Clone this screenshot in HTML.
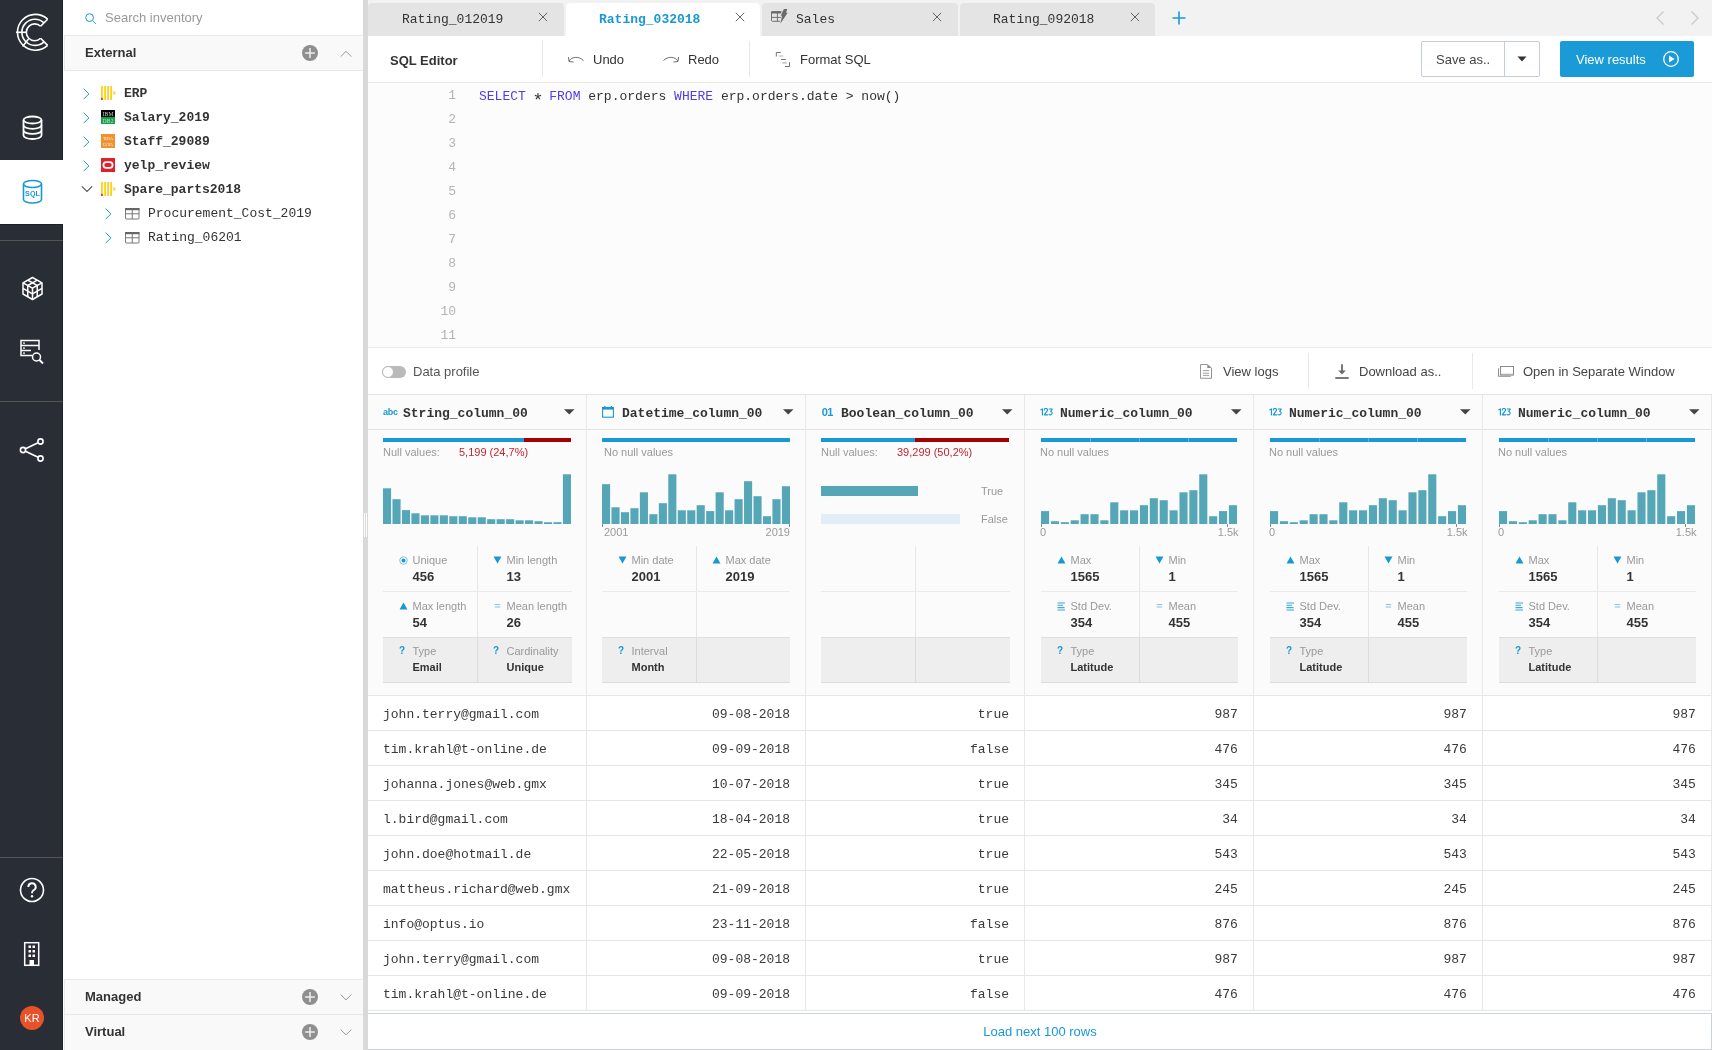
<!DOCTYPE html>
<html><head><meta charset="utf-8">
<style>
*{box-sizing:border-box;margin:0;padding:0}
html,body{width:1712px;height:1050px;overflow:hidden;background:#fff;font-family:"Liberation Sans",sans-serif;color:#333;-webkit-font-smoothing:antialiased}
.abs{position:absolute}
.mono{font-family:"Liberation Mono",monospace}
#nav{position:absolute;left:0;top:0;width:63px;height:1050px;background:#292d36;will-change:transform;border-right:1px solid #1c2029}
#side{position:absolute;left:63px;top:0;width:300px;height:1050px;background:#fff;will-change:transform}
#sbar{position:absolute;left:363px;top:0;width:5px;height:1050px;background:#d9d9d9}
#main{position:absolute;left:368px;top:0;width:1344px;height:1050px;background:#fff;will-change:transform}
</style></head><body>
<div id="nav">
  <div class="abs" style="left:0;top:160px;width:63px;height:64px;background:#fff"></div>
  <div class="abs" style="left:0;top:240px;width:63px;height:1px;background:#545454"></div><div class="abs" style="left:0;top:224px;width:63px;height:1px;background:#1c2029"></div>
  <div class="abs" style="left:0;top:401px;width:63px;height:1px;background:#545454"></div>
  <div class="abs" style="left:0;top:857px;width:63px;height:1px;background:#545454"></div>

  <svg class="abs" style="left:0;top:0" width="63" height="70" viewBox="0 0 63 70">
    <g fill="none" stroke="#fff" stroke-width="1.6">
      <path d="M47.6 19.2 A17.9 17.9 0 1 0 47.6 45.4"/>
      <path d="M44 22.8 A13.1 13.1 0 1 0 44 41.8"/>
      <path d="M40.6 26.3 A8.4 8.4 0 1 0 40.6 38.3"/>
      <path d="M47.6 19.2 L40.6 26.3"/>
      <path d="M47.6 45.4 L40.6 38.3"/>
      <path d="M16 32.3 L26 32.3"/>
      <path d="M22.6 46.4 L28.5 38.9"/>
    </g>
  </svg>
  <svg class="abs" style="left:20px;top:113px" width="25" height="30" viewBox="0 0 25 30">
    <g fill="none" stroke="#fff" stroke-width="1.8">
      <ellipse cx="12.5" cy="7" rx="9" ry="3.5"/>
      <path d="M3.5 7 V22.5 A9 3.5 0 0 0 21.5 22.5 V7"/>
      <path d="M3.5 12.3 A9 3.5 0 0 0 21.5 12.3"/>
      <path d="M3.5 17.4 A9 3.5 0 0 0 21.5 17.4"/>
    </g>
  </svg>
  <svg class="abs" style="left:20px;top:177px" width="25" height="30" viewBox="0 0 25 30">
    <g fill="none" stroke="#1899d4" stroke-width="1.6">
      <ellipse cx="12.5" cy="7" rx="9" ry="3.5"/>
      <path d="M3.5 7 V22.5 A9 3.5 0 0 0 21.5 22.5 V7"/>
    </g>
    <text x="12.5" y="19.3" text-anchor="middle" font-family="Liberation Sans" font-weight="bold" font-size="7.2" fill="#1899d4">SQL</text>
  </svg>
  <svg class="abs" style="left:20px;top:275px" width="25" height="28" viewBox="0 0 25 28">
    <g fill="none" stroke="#fff" stroke-width="1.5" stroke-linejoin="round">
      <path d="M12.5 2.5 L22 7.8 V19 L12.5 24.5 L3 19 V7.8 Z"/>
      <path d="M3 7.8 L12.5 13.2 L22 7.8"/>
      <path d="M12.5 13.2 V24.5"/>
      <path d="M7.75 5.15 L17.25 10.5"/>
      <path d="M17.25 5.15 L7.75 10.5"/>
      <path d="M3 13.4 L12.5 18.8 L22 13.4"/>
      <path d="M7.75 10.5 V21.75"/>
      <path d="M17.25 10.5 V21.75"/>
    </g>
  </svg>
  <svg class="abs" style="left:18px;top:338px" width="28" height="28" viewBox="0 0 28 28">
    <g fill="none" stroke="#fff" stroke-width="1.5">
      <path d="M14 17.5 H3 V2.5 H21 V12"/>
      <path d="M3 7.5 H21"/>
      <path d="M3 12.5 H13"/>
      <circle cx="18.5" cy="19" r="4"/>
      <path d="M21.5 22 L25 25.5" stroke-width="2"/>
    </g>
    <g fill="#fff"><rect x="5" y="4.5" width="2" height="1.2"/><rect x="5" y="9.5" width="2" height="1.2"/><rect x="5" y="14.5" width="2" height="1.2"/></g>
  </svg>
  <svg class="abs" style="left:18px;top:436px" width="28" height="28" viewBox="0 0 28 28">
    <g fill="none" stroke="#fff" stroke-width="1.6">
      <circle cx="5" cy="14" r="2.6"/>
      <circle cx="22.5" cy="5.5" r="2.6"/>
      <circle cx="22.5" cy="22.5" r="2.6"/>
      <path d="M7.4 12.8 L20.1 6.7"/>
      <path d="M7.4 15.2 L20.1 21.3"/>
    </g>
  </svg>
  <svg class="abs" style="left:18px;top:876px" width="28" height="28" viewBox="0 0 28 28">
    <g fill="none" stroke="#fff" stroke-width="1.6">
      <circle cx="14" cy="14" r="11.5"/>
      <path d="M10.3 11 A3.7 3.7 0 1 1 15.5 14.3 C14.3 15 14 15.6 14 17.2" stroke-width="1.9"/>
    </g>
    <circle cx="14" cy="20.3" r="1.2" fill="#fff"/>
  </svg>
  <svg class="abs" style="left:22px;top:940px" width="20" height="28" viewBox="0 0 20 28">
    <rect x="2.7" y="2.7" width="14" height="22.6" fill="none" stroke="#fff" stroke-width="1.5"/>
    <g fill="#fff">
      <rect x="6.5" y="5.5" width="2.5" height="2.5"/><rect x="10.5" y="5.5" width="2.5" height="2.5"/>
      <rect x="6.5" y="10" width="2.5" height="2.5"/><rect x="10.5" y="10" width="2.5" height="2.5"/>
      <rect x="6.5" y="14.5" width="2.5" height="2.5"/><rect x="10.5" y="14.5" width="2.5" height="2.5"/>
      <rect x="7.5" y="20" width="4.5" height="5.5"/>
    </g>
  </svg>
  <div class="abs" style="left:20px;top:1006px;width:24px;height:24px;border-radius:50%;background:#e8522a;color:#fff;font-size:11px;line-height:24px;text-align:center">KR</div>
</div>
<div id="side">
<!--SIDE-->
  <svg class="abs" style="left:21px;top:12px" width="14" height="14" viewBox="0 0 14 14"><g fill="none" stroke="#1899d4" stroke-width="1"><circle cx="5.6" cy="5.6" r="3.9"/><path d="M8.5 8.5 L11.8 11.8"/></g></svg>
  <div class="abs" style="left:42px;top:10px;font-size:13px;color:#999;line-height:16px">Search inventory</div>
  <div class="abs" style="left:1px;top:35px;width:299px;height:36px;background:#f9f9f9;border:1px solid #e8e8e8;border-right:none"></div>
  <div class="abs" style="left:22px;top:45px;font-size:13px;font-weight:bold;color:#333;line-height:16px">External</div>
  <svg class="abs" style="left:239px;top:45px" width="16" height="16" viewBox="0 0 16 16"><circle cx="8" cy="8" r="8" fill="#8f8f8f"/><path d="M8 3.1V12.9M3.1 8H12.9" stroke="#eeeeee" stroke-width="1.5"/></svg>
  <svg class="abs" style="left:276px;top:48px" width="14" height="10" viewBox="0 0 14 10"><path d="M1.7 8.6 L7 3.3 L12.3 8.6" fill="none" stroke="#8a8a8a" stroke-width="0.9"/></svg>
<svg class="abs" style="left:20px;top:87.8px" width="8" height="12" viewBox="0 0 8 12"><path d="M0.6 0.6 L5.9 5.9 L0.6 11.2" fill="none" stroke="#1f9bd6" stroke-width="1"/></svg><svg class="abs" style="left:38px;top:86px" width="15" height="14" viewBox="0 0 15 14"><g fill="#fdd21f"><rect x="0" y="0" width="1.8" height="14"/><rect x="3.2" y="0" width="1.8" height="14"/><rect x="6.2" y="0" width="1.8" height="14"/><rect x="9.2" y="0" width="1.8" height="14"/><rect x="12.3" y="5.4" width="1.9" height="3"/></g><rect x="0" y="11.8" width="1.8" height="2.2" fill="#ee3124"/></svg><div class="abs mono" style="left:61px;top:85.9px;font-size:13px;line-height:16px;font-weight:bold;color:#333;white-space:nowrap">ERP</div><svg class="abs" style="left:20px;top:111.8px" width="8" height="12" viewBox="0 0 8 12"><path d="M0.6 0.6 L5.9 5.9 L0.6 11.2" fill="none" stroke="#1f9bd6" stroke-width="1"/></svg><svg class="abs" style="left:38px;top:110px" width="14" height="14" viewBox="0 0 14 14"><rect width="14" height="7" fill="#050505"/><rect y="7" width="14" height="7" fill="#12a04a"/><text x="7" y="5.7" text-anchor="middle" font-family="Liberation Serif" font-size="5.6" fill="#ccc" textLength="11">IBM</text><text x="7" y="12.7" text-anchor="middle" font-family="Liberation Serif" font-size="5.6" fill="#bde5c8" textLength="11">DB2</text></svg><div class="abs mono" style="left:61px;top:109.9px;font-size:13px;line-height:16px;font-weight:bold;color:#333;white-space:nowrap">Salary_2019</div><svg class="abs" style="left:20px;top:135.8px" width="8" height="12" viewBox="0 0 8 12"><path d="M0.6 0.6 L5.9 5.9 L0.6 11.2" fill="none" stroke="#1f9bd6" stroke-width="1"/></svg><svg class="abs" style="left:38px;top:134px" width="14" height="14" viewBox="0 0 14 14"><rect width="14" height="14" fill="#f29130"/><text x="7" y="6.3" text-anchor="middle" font-family="Liberation Serif" font-size="5" fill="#fde6cc" textLength="10">TERA</text><text x="7" y="11.8" text-anchor="middle" font-family="Liberation Serif" font-size="5" fill="#fde6cc" textLength="10">DATA</text></svg><div class="abs mono" style="left:61px;top:133.9px;font-size:13px;line-height:16px;font-weight:bold;color:#333;white-space:nowrap">Staff_29089</div><svg class="abs" style="left:20px;top:159.8px" width="8" height="12" viewBox="0 0 8 12"><path d="M0.6 0.6 L5.9 5.9 L0.6 11.2" fill="none" stroke="#1f9bd6" stroke-width="1"/></svg><svg class="abs" style="left:38px;top:158px" width="14" height="14" viewBox="0 0 14 14"><rect width="14" height="14" fill="#e3202a"/><rect x="2.4" y="4.1" width="9.2" height="5.8" rx="2.9" fill="none" stroke="#fff" stroke-width="1.7"/></svg><div class="abs mono" style="left:61px;top:157.9px;font-size:13px;line-height:16px;font-weight:bold;color:#333;white-space:nowrap">yelp_review</div><svg class="abs" style="left:18px;top:183.9px" width="12" height="10" viewBox="0 0 12 10"><path d="M0.8 2.3 L6 7.5 L11.2 2.3" fill="none" stroke="#555" stroke-width="1.1"/></svg><svg class="abs" style="left:38px;top:182px" width="15" height="14" viewBox="0 0 15 14"><g fill="#fdd21f"><rect x="0" y="0" width="1.8" height="14"/><rect x="3.2" y="0" width="1.8" height="14"/><rect x="6.2" y="0" width="1.8" height="14"/><rect x="9.2" y="0" width="1.8" height="14"/><rect x="12.3" y="5.4" width="1.9" height="3"/></g><rect x="0" y="11.8" width="1.8" height="2.2" fill="#ee3124"/></svg><div class="abs mono" style="left:61px;top:181.9px;font-size:13px;line-height:16px;font-weight:bold;color:#333;white-space:nowrap">Spare_parts2018</div><svg class="abs" style="left:42px;top:207.8px" width="8" height="12" viewBox="0 0 8 12"><path d="M0.6 0.6 L5.9 5.9 L0.6 11.2" fill="none" stroke="#1f9bd6" stroke-width="1"/></svg><svg class="abs" style="left:62px;top:208px" width="15" height="12" viewBox="0 0 15 12"><g fill="none" stroke="#6a6a6a" stroke-width="0.9"><rect x="0.5" y="0.5" width="13.5" height="10.5" rx="0.8"/><path d="M0.5 5.8H14M7.25 2V11"/></g><rect x="0" y="0" width="14.5" height="2.2" fill="#666"/></svg><div class="abs mono" style="left:85px;top:205.9px;font-size:13px;line-height:16px;font-weight:normal;color:#333;white-space:nowrap">Procurement_Cost_2019</div><svg class="abs" style="left:42px;top:231.8px" width="8" height="12" viewBox="0 0 8 12"><path d="M0.6 0.6 L5.9 5.9 L0.6 11.2" fill="none" stroke="#1f9bd6" stroke-width="1"/></svg><svg class="abs" style="left:62px;top:232px" width="15" height="12" viewBox="0 0 15 12"><g fill="none" stroke="#6a6a6a" stroke-width="0.9"><rect x="0.5" y="0.5" width="13.5" height="10.5" rx="0.8"/><path d="M0.5 5.8H14M7.25 2V11"/></g><rect x="0" y="0" width="14.5" height="2.2" fill="#666"/></svg><div class="abs mono" style="left:85px;top:229.9px;font-size:13px;line-height:16px;font-weight:normal;color:#333;white-space:nowrap">Rating_06201</div>
  <div class="abs" style="left:1px;top:979px;width:299px;height:36px;background:#f9f9f9;border-top:1px solid #e8e8e8;border-left:1px solid #e8e8e8;"></div>
  <div class="abs" style="left:22px;top:989px;font-size:13px;font-weight:bold;color:#333;line-height:16px">Managed</div>
  <svg class="abs" style="left:239px;top:989px" width="16" height="16" viewBox="0 0 16 16"><circle cx="8" cy="8" r="8" fill="#8f8f8f"/><path d="M8 3.1V12.9M3.1 8H12.9" stroke="#eeeeee" stroke-width="1.5"/></svg>
  <svg class="abs" style="left:276px;top:992px" width="14" height="10" viewBox="0 0 14 10"><path d="M1.7 2.6 L7 7.9 L12.3 2.6" fill="none" stroke="#8a8a8a" stroke-width="0.9"/></svg>

  <div class="abs" style="left:1px;top:1014px;width:299px;height:36px;background:#f9f9f9;border-top:1px solid #e8e8e8;border-left:1px solid #e8e8e8;"></div>
  <div class="abs" style="left:22px;top:1024px;font-size:13px;font-weight:bold;color:#333;line-height:16px">Virtual</div>
  <svg class="abs" style="left:239px;top:1024px" width="16" height="16" viewBox="0 0 16 16"><circle cx="8" cy="8" r="8" fill="#8f8f8f"/><path d="M8 3.1V12.9M3.1 8H12.9" stroke="#eeeeee" stroke-width="1.5"/></svg>
  <svg class="abs" style="left:276px;top:1027px" width="14" height="10" viewBox="0 0 14 10"><path d="M1.7 2.6 L7 7.9 L12.3 2.6" fill="none" stroke="#8a8a8a" stroke-width="0.9"/></svg>
<!--/SIDE-->
</div>
<div id="sbar"><div class="abs" style="left:1px;top:513px;width:1px;height:24px;background:#fff"></div><div class="abs" style="left:3px;top:513px;width:1px;height:24px;background:#fff"></div></div>
<div id="main">
<!--LOWER-->
  <div class="abs" style="left:14px;top:366px;width:24px;height:12px;border-radius:6px;background:#bababa"></div>
  <div class="abs" style="left:14px;top:366px;width:12px;height:12px;border-radius:6px;background:#fff;border:1px solid #bababa"></div>
  <div class="abs" style="left:45px;top:364px;font-size:13px;color:#555;line-height:16px">Data profile</div>
  <svg class="abs" style="left:832px;top:364px" width="13" height="16" viewBox="0 0 13 16"><g fill="none" stroke="#8a8a8a" stroke-width="0.9"><path d="M0.5 0.5H7.5L11.5 4V14.3H0.5Z"/></g><path d="M7.3 0.6V3.9H11.4Z" fill="#8a8a8a"/><path d="M3 6.6H9M3 9.2H9M3 11.4H9" stroke="#8a8a8a" stroke-width="0.8"/></svg>
  <div class="abs" style="left:855px;top:364px;font-size:13px;color:#444;line-height:16px">View logs</div>
  <div class="abs" style="left:940px;top:353px;width:1px;height:36px;background:#e8e8e8"></div>
  <svg class="abs" style="left:966px;top:363px" width="16" height="17" viewBox="0 0 16 17"><path d="M8 1.3V9" stroke="#6a6a6a" stroke-width="1.8"/><path d="M4.2 7.6H11.8L8 11.6Z" fill="#6a6a6a"/><path d="M1.3 15H14.7" stroke="#6a6a6a" stroke-width="1.8"/></svg>
  <div class="abs" style="left:991px;top:364px;font-size:13px;color:#444;line-height:16px">Download as..</div>
  <div class="abs" style="left:1104px;top:353px;width:1px;height:36px;background:#e8e8e8"></div>
  <svg class="abs" style="left:1129px;top:364px" width="18" height="14" viewBox="0 0 18 14"><rect x="3.5" y="9.6" width="13" height="1.5" fill="#c8c8c8"/><g fill="none" stroke="#888" stroke-width="0.95"><rect x="3.5" y="2.5" width="13" height="8.6"/><path d="M1.5 4.3V12.3H13.8"/></g></svg>
  <div class="abs" style="left:1155px;top:364px;font-size:13px;color:#444;line-height:16px">Open in Separate Window</div>
<div class="abs" style="left:0;top:394px;width:1344px;height:1px;background:#e3e3e3"></div><div class="abs" style="left:0;top:395px;width:1344px;height:300px;background:#fbfbfb"></div><div class="abs" style="left:0;top:429px;width:1344px;height:1px;background:#e3e3e3"></div><div class="abs" style="left:0;top:695px;width:1344px;height:1px;background:#e6e6e6"></div><div class="abs" style="left:218px;top:395px;width:1px;height:615px;background:#e8e8e8"></div><div class="abs" style="left:437px;top:395px;width:1px;height:615px;background:#e8e8e8"></div><div class="abs" style="left:656px;top:395px;width:1px;height:615px;background:#e8e8e8"></div><div class="abs" style="left:885px;top:395px;width:1px;height:615px;background:#e8e8e8"></div><div class="abs" style="left:1114px;top:395px;width:1px;height:615px;background:#e8e8e8"></div><div class="abs" style="left:1343px;top:395px;width:1px;height:615px;background:#e8e8e8"></div><div class="abs" style="left:15px;top:407px;font-size:9px;line-height:10px;color:#1899d4;font-weight:bold;letter-spacing:-0.3px">abc</div><div class="abs mono" style="left:35px;top:406px;font-size:13px;line-height:16px;font-weight:bold;color:#333;white-space:nowrap">String_column_00</div><svg class="abs" style="left:196px;top:408.5px" width="11" height="6" viewBox="0 0 11 6"><path d="M0 0.3H10.5L5.25 5.5Z" fill="#444"/></svg><div class="abs" style="left:15px;top:438px;width:188px;height:4px;background:#a50000"></div><div class="abs" style="left:15px;top:438px;width:141px;height:4px;background:#1899d4"></div><div class="abs" style="left:15px;top:446px;font-size:11px;line-height:13px;color:#999;white-space:nowrap;">Null values:</div><div class="abs" style="left:91px;top:446px;font-size:11px;line-height:13px;color:#c0262d;white-space:nowrap;">5,199 (24,7%)</div><svg class="abs" style="left:15px;top:470px" width="188" height="54" viewBox="0 0 188 54"><rect x="0.00" y="18.30" width="8.1" height="35.70" fill="#55a7b7"/><rect x="9.47" y="29.20" width="8.1" height="24.80" fill="#55a7b7"/><rect x="18.94" y="40.10" width="8.1" height="13.90" fill="#55a7b7"/><rect x="28.41" y="43.30" width="8.1" height="10.70" fill="#55a7b7"/><rect x="37.87" y="45.30" width="8.1" height="8.70" fill="#55a7b7"/><rect x="47.34" y="45.30" width="8.1" height="8.70" fill="#55a7b7"/><rect x="56.81" y="45.30" width="8.1" height="8.70" fill="#55a7b7"/><rect x="66.28" y="46.20" width="8.1" height="7.80" fill="#55a7b7"/><rect x="75.75" y="46.20" width="8.1" height="7.80" fill="#55a7b7"/><rect x="85.22" y="47.30" width="8.1" height="6.70" fill="#55a7b7"/><rect x="94.68" y="47.30" width="8.1" height="6.70" fill="#55a7b7"/><rect x="104.15" y="49.20" width="8.1" height="4.80" fill="#55a7b7"/><rect x="113.62" y="49.20" width="8.1" height="4.80" fill="#55a7b7"/><rect x="123.09" y="49.20" width="8.1" height="4.80" fill="#55a7b7"/><rect x="132.56" y="50.30" width="8.1" height="3.70" fill="#55a7b7"/><rect x="142.03" y="50.30" width="8.1" height="3.70" fill="#55a7b7"/><rect x="151.49" y="51.20" width="8.1" height="2.80" fill="#55a7b7"/><rect x="160.96" y="52.20" width="8.1" height="1.80" fill="#55a7b7"/><rect x="170.43" y="52.20" width="8.1" height="1.80" fill="#55a7b7"/><rect x="179.90" y="4.30" width="8.1" height="49.70" fill="#55a7b7"/></svg><div class="abs" style="left:109px;top:546px;width:1px;height:137px;background:#e6e6e6"></div><div class="abs" style="left:15px;top:591px;width:189px;height:1px;background:#eaeaea"></div><div class="abs" style="left:15px;top:637px;width:189px;height:45px;background:#eeeeee;border-top:1px solid #dedede"></div><div class="abs" style="left:109px;top:637px;width:1px;height:45px;background:#dcdcdc"></div><div class="abs" style="left:15px;top:682px;width:189px;height:1px;background:#dcdcdc"></div><svg class="abs" style="left:31px;top:556px" width="9" height="9" viewBox="0 0 9 9"><circle cx="4.5" cy="4.5" r="3.8" fill="none" stroke="#7cc3e6" stroke-width="1"/><circle cx="4.5" cy="4.5" r="2" fill="#1899d4"/></svg><div class="abs" style="left:44.5px;top:554px;font-size:11px;line-height:13px;color:#999;white-space:nowrap;">Unique</div><div class="abs" style="left:44.5px;top:569px;font-size:13px;line-height:15px;font-weight:bold;color:#333">456</div><svg class="abs" style="left:125px;top:556px" width="9" height="8" viewBox="0 0 9 8"><path d="M0.5 0.5H8.5L4.5 7.5Z" fill="#1899d4"/></svg><div class="abs" style="left:138.5px;top:554px;font-size:11px;line-height:13px;color:#999;white-space:nowrap;">Min length</div><div class="abs" style="left:138.5px;top:569px;font-size:13px;line-height:15px;font-weight:bold;color:#333">13</div><svg class="abs" style="left:31px;top:602px" width="9" height="8" viewBox="0 0 9 8"><path d="M0.5 7.5H8.5L4.5 0.5Z" fill="#1899d4"/></svg><div class="abs" style="left:44.5px;top:600px;font-size:11px;line-height:13px;color:#999;white-space:nowrap;">Max length</div><div class="abs" style="left:44.5px;top:615px;font-size:13px;line-height:15px;font-weight:bold;color:#333">54</div><svg class="abs" style="left:125px;top:602px" width="9" height="8" viewBox="0 0 9 8"><path d="M1.8 2.6H7.2M1.8 5H7.2" stroke="#7cc3e6" stroke-width="1"/></svg><div class="abs" style="left:138.5px;top:600px;font-size:11px;line-height:13px;color:#999;white-space:nowrap;">Mean length</div><div class="abs" style="left:138.5px;top:615px;font-size:13px;line-height:15px;font-weight:bold;color:#333">26</div><div class="abs" style="left:31px;top:645px;font-size:10px;font-weight:bold;line-height:12px;color:#1899d4">?</div><div class="abs" style="left:44.5px;top:645px;font-size:11px;line-height:13px;color:#999;white-space:nowrap;">Type</div><div class="abs" style="left:44.5px;top:660.3px;font-size:11px;line-height:14px;font-weight:bold;color:#333">Email</div><div class="abs" style="left:125px;top:645px;font-size:10px;font-weight:bold;line-height:12px;color:#1899d4">?</div><div class="abs" style="left:138.5px;top:645px;font-size:11px;line-height:13px;color:#999;white-space:nowrap;">Cardinality</div><div class="abs" style="left:138.5px;top:660.3px;font-size:11px;line-height:14px;font-weight:bold;color:#333">Unique</div><svg class="abs" style="left:234px;top:406px" width="12" height="12" viewBox="0 0 12 12"><g fill="none" stroke="#1899d4" stroke-width="1.1"><rect x="0.6" y="1.6" width="10.8" height="9.6"/></g><rect x="0" y="1" width="12" height="2.6" fill="#1899d4"/><rect x="2.2" y="0" width="1.2" height="2" fill="#1899d4"/><rect x="8.8" y="0" width="1.2" height="2" fill="#1899d4"/></svg><div class="abs mono" style="left:254px;top:406px;font-size:13px;line-height:16px;font-weight:bold;color:#333;white-space:nowrap">Datetime_column_00</div><svg class="abs" style="left:415px;top:408.5px" width="11" height="6" viewBox="0 0 11 6"><path d="M0 0.3H10.5L5.25 5.5Z" fill="#444"/></svg><div class="abs" style="left:234px;top:438px;width:188px;height:4px;background:#1899d4"></div><div class="abs" style="left:236px;top:446px;font-size:11px;line-height:13px;color:#999;white-space:nowrap;">No null values</div><svg class="abs" style="left:234px;top:470px" width="188" height="54" viewBox="0 0 188 54"><rect x="0.00" y="14.20" width="8.1" height="39.80" fill="#55a7b7"/><rect x="9.47" y="37.30" width="8.1" height="16.70" fill="#55a7b7"/><rect x="18.94" y="42.20" width="8.1" height="11.80" fill="#55a7b7"/><rect x="28.41" y="38.20" width="8.1" height="15.80" fill="#55a7b7"/><rect x="37.87" y="22.30" width="8.1" height="31.70" fill="#55a7b7"/><rect x="47.34" y="44.20" width="8.1" height="9.80" fill="#55a7b7"/><rect x="56.81" y="33.20" width="8.1" height="20.80" fill="#55a7b7"/><rect x="66.28" y="4.30" width="8.1" height="49.70" fill="#55a7b7"/><rect x="75.75" y="40.30" width="8.1" height="13.70" fill="#55a7b7"/><rect x="85.22" y="40.30" width="8.1" height="13.70" fill="#55a7b7"/><rect x="94.68" y="35.20" width="8.1" height="18.80" fill="#55a7b7"/><rect x="104.15" y="41.10" width="8.1" height="12.90" fill="#55a7b7"/><rect x="113.62" y="22.30" width="8.1" height="31.70" fill="#55a7b7"/><rect x="123.09" y="40.30" width="8.1" height="13.70" fill="#55a7b7"/><rect x="132.56" y="29.20" width="8.1" height="24.80" fill="#55a7b7"/><rect x="142.03" y="11.20" width="8.1" height="42.80" fill="#55a7b7"/><rect x="151.49" y="26.20" width="8.1" height="27.80" fill="#55a7b7"/><rect x="160.96" y="46.20" width="8.1" height="7.80" fill="#55a7b7"/><rect x="170.43" y="29.20" width="8.1" height="24.80" fill="#55a7b7"/><rect x="179.90" y="16.20" width="8.1" height="37.80" fill="#55a7b7"/></svg><div class="abs" style="left:234px;top:524px;width:1px;height:3px;background:#888"></div><div class="abs" style="left:421px;top:524px;width:1px;height:3px;background:#888"></div><div class="abs" style="left:236px;top:526px;font-size:11px;line-height:13px;color:#999;white-space:nowrap;">2001</div><div class="abs" style="left:362px;width:60px;text-align:right;top:526px;font-size:11px;line-height:13px;color:#999">2019</div><div class="abs" style="left:328px;top:546px;width:1px;height:137px;background:#e6e6e6"></div><div class="abs" style="left:234px;top:591px;width:188px;height:1px;background:#eaeaea"></div><div class="abs" style="left:234px;top:637px;width:188px;height:45px;background:#eeeeee;border-top:1px solid #dedede"></div><div class="abs" style="left:328px;top:637px;width:1px;height:45px;background:#dcdcdc"></div><div class="abs" style="left:234px;top:682px;width:188px;height:1px;background:#dcdcdc"></div><svg class="abs" style="left:250px;top:556px" width="9" height="8" viewBox="0 0 9 8"><path d="M0.5 0.5H8.5L4.5 7.5Z" fill="#1899d4"/></svg><div class="abs" style="left:263.5px;top:554px;font-size:11px;line-height:13px;color:#999;white-space:nowrap;">Min date</div><div class="abs" style="left:263.5px;top:569px;font-size:13px;line-height:15px;font-weight:bold;color:#333">2001</div><svg class="abs" style="left:344px;top:556px" width="9" height="8" viewBox="0 0 9 8"><path d="M0.5 7.5H8.5L4.5 0.5Z" fill="#1899d4"/></svg><div class="abs" style="left:357.5px;top:554px;font-size:11px;line-height:13px;color:#999;white-space:nowrap;">Max date</div><div class="abs" style="left:357.5px;top:569px;font-size:13px;line-height:15px;font-weight:bold;color:#333">2019</div><div class="abs" style="left:250px;top:645px;font-size:10px;font-weight:bold;line-height:12px;color:#1899d4">?</div><div class="abs" style="left:263.5px;top:645px;font-size:11px;line-height:13px;color:#999;white-space:nowrap;">Interval</div><div class="abs" style="left:263.5px;top:660.3px;font-size:11px;line-height:14px;font-weight:bold;color:#333">Month</div><div class="abs" style="left:453.70000000000005px;top:406px;font-size:11px;line-height:13px;color:#1899d4;font-weight:bold;letter-spacing:-0.5px">01</div><div class="abs mono" style="left:473px;top:406px;font-size:13px;line-height:16px;font-weight:bold;color:#333;white-space:nowrap">Boolean_column_00</div><svg class="abs" style="left:634px;top:408.5px" width="11" height="6" viewBox="0 0 11 6"><path d="M0 0.3H10.5L5.25 5.5Z" fill="#444"/></svg><div class="abs" style="left:453px;top:438px;width:188px;height:4px;background:#a50000"></div><div class="abs" style="left:453px;top:438px;width:94px;height:4px;background:#1899d4"></div><div class="abs" style="left:453px;top:446px;font-size:11px;line-height:13px;color:#999;white-space:nowrap;">Null values:</div><div class="abs" style="left:529px;top:446px;font-size:11px;line-height:13px;color:#c0262d;white-space:nowrap;">39,299 (50,2%)</div><div class="abs" style="left:453px;top:486px;width:97px;height:10px;background:#55a7b7"></div><div class="abs" style="left:453px;top:514px;width:139px;height:10px;background:#e1eef5"></div><div class="abs" style="left:613px;top:485px;font-size:11px;line-height:13px;color:#999;white-space:nowrap;">True</div><div class="abs" style="left:613px;top:513px;font-size:11px;line-height:13px;color:#999;white-space:nowrap;">False</div><div class="abs" style="left:547px;top:546px;width:1px;height:137px;background:#e6e6e6"></div><div class="abs" style="left:453px;top:591px;width:189px;height:1px;background:#eaeaea"></div><div class="abs" style="left:453px;top:637px;width:189px;height:45px;background:#eeeeee;border-top:1px solid #dedede"></div><div class="abs" style="left:547px;top:637px;width:1px;height:45px;background:#dcdcdc"></div><div class="abs" style="left:453px;top:682px;width:189px;height:1px;background:#dcdcdc"></div><svg class="abs" style="left:672px;top:408px" width="14" height="8" viewBox="0 0 14 8"><g fill="none" stroke="#1899d4" stroke-width="1.15" stroke-linejoin="round" stroke-linecap="round"><path d="M0.9 1.8L2.4 0.9V6.9"/><path d="M4.3 2A1.6 1.5 0 1 1 7.3 2.6L4.3 6.9H7.6"/><path d="M9.1 1H12.3L10.6 3.3A1.8 1.8 0 1 1 9 6.3"/></g></svg><div class="abs mono" style="left:692px;top:406px;font-size:13px;line-height:16px;font-weight:bold;color:#333;white-space:nowrap">Numeric_column_00</div><svg class="abs" style="left:863px;top:408.5px" width="11" height="6" viewBox="0 0 11 6"><path d="M0 0.3H10.5L5.25 5.5Z" fill="#444"/></svg><div class="abs" style="left:673px;top:438px;width:196px;height:4px;background:#1899d4"></div><div class="abs" style="left:722.0px;top:438px;width:1px;height:4px;background:#5bb5e0"></div><div class="abs" style="left:771.0px;top:438px;width:1px;height:4px;background:#5bb5e0"></div><div class="abs" style="left:820.0px;top:438px;width:1px;height:4px;background:#5bb5e0"></div><div class="abs" style="left:672px;top:446px;font-size:11px;line-height:13px;color:#999;white-space:nowrap;">No null values</div><svg class="abs" style="left:673px;top:470px" width="196" height="54" viewBox="0 0 196 54"><rect x="0.00" y="41.10" width="8.1" height="12.90" fill="#55a7b7"/><rect x="9.89" y="51.20" width="8.1" height="2.80" fill="#55a7b7"/><rect x="19.78" y="52.20" width="8.1" height="1.80" fill="#55a7b7"/><rect x="29.67" y="50.30" width="8.1" height="3.70" fill="#55a7b7"/><rect x="39.56" y="44.20" width="8.1" height="9.80" fill="#55a7b7"/><rect x="49.45" y="44.20" width="8.1" height="9.80" fill="#55a7b7"/><rect x="59.34" y="50.30" width="8.1" height="3.70" fill="#55a7b7"/><rect x="69.23" y="32.30" width="8.1" height="21.70" fill="#55a7b7"/><rect x="79.12" y="40.30" width="8.1" height="13.70" fill="#55a7b7"/><rect x="89.01" y="40.30" width="8.1" height="13.70" fill="#55a7b7"/><rect x="98.89" y="35.20" width="8.1" height="18.80" fill="#55a7b7"/><rect x="108.78" y="28.20" width="8.1" height="25.80" fill="#55a7b7"/><rect x="118.67" y="30.20" width="8.1" height="23.80" fill="#55a7b7"/><rect x="128.56" y="40.30" width="8.1" height="13.70" fill="#55a7b7"/><rect x="138.45" y="22.30" width="8.1" height="31.70" fill="#55a7b7"/><rect x="148.34" y="20.20" width="8.1" height="33.80" fill="#55a7b7"/><rect x="158.23" y="4.30" width="8.1" height="49.70" fill="#55a7b7"/><rect x="168.12" y="46.20" width="8.1" height="7.80" fill="#55a7b7"/><rect x="178.01" y="41.10" width="8.1" height="12.90" fill="#55a7b7"/><rect x="187.90" y="35.20" width="8.1" height="18.80" fill="#55a7b7"/></svg><div class="abs" style="left:673px;top:524px;width:1px;height:3px;background:#888"></div><div class="abs" style="left:859px;top:524px;width:1px;height:3px;background:#888"></div><div class="abs" style="left:672px;top:526px;font-size:11px;line-height:13px;color:#999;white-space:nowrap;">0</div><div class="abs" style="left:810.5px;width:60px;text-align:right;top:526px;font-size:11px;line-height:13px;color:#999">1.5k</div><div class="abs" style="left:771px;top:546px;width:1px;height:137px;background:#e6e6e6"></div><div class="abs" style="left:673px;top:591px;width:197px;height:1px;background:#eaeaea"></div><div class="abs" style="left:673px;top:637px;width:197px;height:45px;background:#eeeeee;border-top:1px solid #dedede"></div><div class="abs" style="left:771px;top:637px;width:1px;height:45px;background:#dcdcdc"></div><div class="abs" style="left:673px;top:682px;width:197px;height:1px;background:#dcdcdc"></div><svg class="abs" style="left:689px;top:556px" width="9" height="8" viewBox="0 0 9 8"><path d="M0.5 7.5H8.5L4.5 0.5Z" fill="#1899d4"/></svg><div class="abs" style="left:702.5px;top:554px;font-size:11px;line-height:13px;color:#999;white-space:nowrap;">Max</div><div class="abs" style="left:702.5px;top:569px;font-size:13px;line-height:15px;font-weight:bold;color:#333">1565</div><svg class="abs" style="left:787px;top:556px" width="9" height="8" viewBox="0 0 9 8"><path d="M0.5 0.5H8.5L4.5 7.5Z" fill="#1899d4"/></svg><div class="abs" style="left:800.5px;top:554px;font-size:11px;line-height:13px;color:#999;white-space:nowrap;">Min</div><div class="abs" style="left:800.5px;top:569px;font-size:13px;line-height:15px;font-weight:bold;color:#333">1</div><svg class="abs" style="left:689px;top:602px" width="9" height="9" viewBox="0 0 9 9"><path d="M0.5 1H8M0.5 3.3H6M0.5 5.6H7.5M0.5 8H8" stroke="#1899d4" stroke-width="1.1" opacity="0.85"/></svg><div class="abs" style="left:702.5px;top:600px;font-size:11px;line-height:13px;color:#999;white-space:nowrap;">Std Dev.</div><div class="abs" style="left:702.5px;top:615px;font-size:13px;line-height:15px;font-weight:bold;color:#333">354</div><svg class="abs" style="left:787px;top:602px" width="9" height="8" viewBox="0 0 9 8"><path d="M1.8 2.6H7.2M1.8 5H7.2" stroke="#7cc3e6" stroke-width="1"/></svg><div class="abs" style="left:800.5px;top:600px;font-size:11px;line-height:13px;color:#999;white-space:nowrap;">Mean</div><div class="abs" style="left:800.5px;top:615px;font-size:13px;line-height:15px;font-weight:bold;color:#333">455</div><div class="abs" style="left:689px;top:645px;font-size:10px;font-weight:bold;line-height:12px;color:#1899d4">?</div><div class="abs" style="left:702.5px;top:645px;font-size:11px;line-height:13px;color:#999;white-space:nowrap;">Type</div><div class="abs" style="left:702.5px;top:660.3px;font-size:11px;line-height:14px;font-weight:bold;color:#333">Latitude</div><svg class="abs" style="left:901px;top:408px" width="14" height="8" viewBox="0 0 14 8"><g fill="none" stroke="#1899d4" stroke-width="1.15" stroke-linejoin="round" stroke-linecap="round"><path d="M0.9 1.8L2.4 0.9V6.9"/><path d="M4.3 2A1.6 1.5 0 1 1 7.3 2.6L4.3 6.9H7.6"/><path d="M9.1 1H12.3L10.6 3.3A1.8 1.8 0 1 1 9 6.3"/></g></svg><div class="abs mono" style="left:921px;top:406px;font-size:13px;line-height:16px;font-weight:bold;color:#333;white-space:nowrap">Numeric_column_00</div><svg class="abs" style="left:1092px;top:408.5px" width="11" height="6" viewBox="0 0 11 6"><path d="M0 0.3H10.5L5.25 5.5Z" fill="#444"/></svg><div class="abs" style="left:902px;top:438px;width:196px;height:4px;background:#1899d4"></div><div class="abs" style="left:951.0px;top:438px;width:1px;height:4px;background:#5bb5e0"></div><div class="abs" style="left:1000.0px;top:438px;width:1px;height:4px;background:#5bb5e0"></div><div class="abs" style="left:1049.0px;top:438px;width:1px;height:4px;background:#5bb5e0"></div><div class="abs" style="left:901px;top:446px;font-size:11px;line-height:13px;color:#999;white-space:nowrap;">No null values</div><svg class="abs" style="left:902px;top:470px" width="196" height="54" viewBox="0 0 196 54"><rect x="0.00" y="41.10" width="8.1" height="12.90" fill="#55a7b7"/><rect x="9.89" y="51.20" width="8.1" height="2.80" fill="#55a7b7"/><rect x="19.78" y="52.20" width="8.1" height="1.80" fill="#55a7b7"/><rect x="29.67" y="50.30" width="8.1" height="3.70" fill="#55a7b7"/><rect x="39.56" y="44.20" width="8.1" height="9.80" fill="#55a7b7"/><rect x="49.45" y="44.20" width="8.1" height="9.80" fill="#55a7b7"/><rect x="59.34" y="50.30" width="8.1" height="3.70" fill="#55a7b7"/><rect x="69.23" y="32.30" width="8.1" height="21.70" fill="#55a7b7"/><rect x="79.12" y="40.30" width="8.1" height="13.70" fill="#55a7b7"/><rect x="89.01" y="40.30" width="8.1" height="13.70" fill="#55a7b7"/><rect x="98.89" y="35.20" width="8.1" height="18.80" fill="#55a7b7"/><rect x="108.78" y="28.20" width="8.1" height="25.80" fill="#55a7b7"/><rect x="118.67" y="30.20" width="8.1" height="23.80" fill="#55a7b7"/><rect x="128.56" y="40.30" width="8.1" height="13.70" fill="#55a7b7"/><rect x="138.45" y="22.30" width="8.1" height="31.70" fill="#55a7b7"/><rect x="148.34" y="20.20" width="8.1" height="33.80" fill="#55a7b7"/><rect x="158.23" y="4.30" width="8.1" height="49.70" fill="#55a7b7"/><rect x="168.12" y="46.20" width="8.1" height="7.80" fill="#55a7b7"/><rect x="178.01" y="41.10" width="8.1" height="12.90" fill="#55a7b7"/><rect x="187.90" y="35.20" width="8.1" height="18.80" fill="#55a7b7"/></svg><div class="abs" style="left:902px;top:524px;width:1px;height:3px;background:#888"></div><div class="abs" style="left:1088px;top:524px;width:1px;height:3px;background:#888"></div><div class="abs" style="left:901px;top:526px;font-size:11px;line-height:13px;color:#999;white-space:nowrap;">0</div><div class="abs" style="left:1039.5px;width:60px;text-align:right;top:526px;font-size:11px;line-height:13px;color:#999">1.5k</div><div class="abs" style="left:1000px;top:546px;width:1px;height:137px;background:#e6e6e6"></div><div class="abs" style="left:902px;top:591px;width:197px;height:1px;background:#eaeaea"></div><div class="abs" style="left:902px;top:637px;width:197px;height:45px;background:#eeeeee;border-top:1px solid #dedede"></div><div class="abs" style="left:1000px;top:637px;width:1px;height:45px;background:#dcdcdc"></div><div class="abs" style="left:902px;top:682px;width:197px;height:1px;background:#dcdcdc"></div><svg class="abs" style="left:918px;top:556px" width="9" height="8" viewBox="0 0 9 8"><path d="M0.5 7.5H8.5L4.5 0.5Z" fill="#1899d4"/></svg><div class="abs" style="left:931.5px;top:554px;font-size:11px;line-height:13px;color:#999;white-space:nowrap;">Max</div><div class="abs" style="left:931.5px;top:569px;font-size:13px;line-height:15px;font-weight:bold;color:#333">1565</div><svg class="abs" style="left:1016px;top:556px" width="9" height="8" viewBox="0 0 9 8"><path d="M0.5 0.5H8.5L4.5 7.5Z" fill="#1899d4"/></svg><div class="abs" style="left:1029.5px;top:554px;font-size:11px;line-height:13px;color:#999;white-space:nowrap;">Min</div><div class="abs" style="left:1029.5px;top:569px;font-size:13px;line-height:15px;font-weight:bold;color:#333">1</div><svg class="abs" style="left:918px;top:602px" width="9" height="9" viewBox="0 0 9 9"><path d="M0.5 1H8M0.5 3.3H6M0.5 5.6H7.5M0.5 8H8" stroke="#1899d4" stroke-width="1.1" opacity="0.85"/></svg><div class="abs" style="left:931.5px;top:600px;font-size:11px;line-height:13px;color:#999;white-space:nowrap;">Std Dev.</div><div class="abs" style="left:931.5px;top:615px;font-size:13px;line-height:15px;font-weight:bold;color:#333">354</div><svg class="abs" style="left:1016px;top:602px" width="9" height="8" viewBox="0 0 9 8"><path d="M1.8 2.6H7.2M1.8 5H7.2" stroke="#7cc3e6" stroke-width="1"/></svg><div class="abs" style="left:1029.5px;top:600px;font-size:11px;line-height:13px;color:#999;white-space:nowrap;">Mean</div><div class="abs" style="left:1029.5px;top:615px;font-size:13px;line-height:15px;font-weight:bold;color:#333">455</div><div class="abs" style="left:918px;top:645px;font-size:10px;font-weight:bold;line-height:12px;color:#1899d4">?</div><div class="abs" style="left:931.5px;top:645px;font-size:11px;line-height:13px;color:#999;white-space:nowrap;">Type</div><div class="abs" style="left:931.5px;top:660.3px;font-size:11px;line-height:14px;font-weight:bold;color:#333">Latitude</div><svg class="abs" style="left:1130px;top:408px" width="14" height="8" viewBox="0 0 14 8"><g fill="none" stroke="#1899d4" stroke-width="1.15" stroke-linejoin="round" stroke-linecap="round"><path d="M0.9 1.8L2.4 0.9V6.9"/><path d="M4.3 2A1.6 1.5 0 1 1 7.3 2.6L4.3 6.9H7.6"/><path d="M9.1 1H12.3L10.6 3.3A1.8 1.8 0 1 1 9 6.3"/></g></svg><div class="abs mono" style="left:1150px;top:406px;font-size:13px;line-height:16px;font-weight:bold;color:#333;white-space:nowrap">Numeric_column_00</div><svg class="abs" style="left:1321px;top:408.5px" width="11" height="6" viewBox="0 0 11 6"><path d="M0 0.3H10.5L5.25 5.5Z" fill="#444"/></svg><div class="abs" style="left:1131px;top:438px;width:196px;height:4px;background:#1899d4"></div><div class="abs" style="left:1180.0px;top:438px;width:1px;height:4px;background:#5bb5e0"></div><div class="abs" style="left:1229.0px;top:438px;width:1px;height:4px;background:#5bb5e0"></div><div class="abs" style="left:1278.0px;top:438px;width:1px;height:4px;background:#5bb5e0"></div><div class="abs" style="left:1130px;top:446px;font-size:11px;line-height:13px;color:#999;white-space:nowrap;">No null values</div><svg class="abs" style="left:1131px;top:470px" width="196" height="54" viewBox="0 0 196 54"><rect x="0.00" y="41.10" width="8.1" height="12.90" fill="#55a7b7"/><rect x="9.89" y="51.20" width="8.1" height="2.80" fill="#55a7b7"/><rect x="19.78" y="52.20" width="8.1" height="1.80" fill="#55a7b7"/><rect x="29.67" y="50.30" width="8.1" height="3.70" fill="#55a7b7"/><rect x="39.56" y="44.20" width="8.1" height="9.80" fill="#55a7b7"/><rect x="49.45" y="44.20" width="8.1" height="9.80" fill="#55a7b7"/><rect x="59.34" y="50.30" width="8.1" height="3.70" fill="#55a7b7"/><rect x="69.23" y="32.30" width="8.1" height="21.70" fill="#55a7b7"/><rect x="79.12" y="40.30" width="8.1" height="13.70" fill="#55a7b7"/><rect x="89.01" y="40.30" width="8.1" height="13.70" fill="#55a7b7"/><rect x="98.89" y="35.20" width="8.1" height="18.80" fill="#55a7b7"/><rect x="108.78" y="28.20" width="8.1" height="25.80" fill="#55a7b7"/><rect x="118.67" y="30.20" width="8.1" height="23.80" fill="#55a7b7"/><rect x="128.56" y="40.30" width="8.1" height="13.70" fill="#55a7b7"/><rect x="138.45" y="22.30" width="8.1" height="31.70" fill="#55a7b7"/><rect x="148.34" y="20.20" width="8.1" height="33.80" fill="#55a7b7"/><rect x="158.23" y="4.30" width="8.1" height="49.70" fill="#55a7b7"/><rect x="168.12" y="46.20" width="8.1" height="7.80" fill="#55a7b7"/><rect x="178.01" y="41.10" width="8.1" height="12.90" fill="#55a7b7"/><rect x="187.90" y="35.20" width="8.1" height="18.80" fill="#55a7b7"/></svg><div class="abs" style="left:1131px;top:524px;width:1px;height:3px;background:#888"></div><div class="abs" style="left:1317px;top:524px;width:1px;height:3px;background:#888"></div><div class="abs" style="left:1130px;top:526px;font-size:11px;line-height:13px;color:#999;white-space:nowrap;">0</div><div class="abs" style="left:1268.5px;width:60px;text-align:right;top:526px;font-size:11px;line-height:13px;color:#999">1.5k</div><div class="abs" style="left:1229px;top:546px;width:1px;height:137px;background:#e6e6e6"></div><div class="abs" style="left:1131px;top:591px;width:197px;height:1px;background:#eaeaea"></div><div class="abs" style="left:1131px;top:637px;width:197px;height:45px;background:#eeeeee;border-top:1px solid #dedede"></div><div class="abs" style="left:1229px;top:637px;width:1px;height:45px;background:#dcdcdc"></div><div class="abs" style="left:1131px;top:682px;width:197px;height:1px;background:#dcdcdc"></div><svg class="abs" style="left:1147px;top:556px" width="9" height="8" viewBox="0 0 9 8"><path d="M0.5 7.5H8.5L4.5 0.5Z" fill="#1899d4"/></svg><div class="abs" style="left:1160.5px;top:554px;font-size:11px;line-height:13px;color:#999;white-space:nowrap;">Max</div><div class="abs" style="left:1160.5px;top:569px;font-size:13px;line-height:15px;font-weight:bold;color:#333">1565</div><svg class="abs" style="left:1245px;top:556px" width="9" height="8" viewBox="0 0 9 8"><path d="M0.5 0.5H8.5L4.5 7.5Z" fill="#1899d4"/></svg><div class="abs" style="left:1258.5px;top:554px;font-size:11px;line-height:13px;color:#999;white-space:nowrap;">Min</div><div class="abs" style="left:1258.5px;top:569px;font-size:13px;line-height:15px;font-weight:bold;color:#333">1</div><svg class="abs" style="left:1147px;top:602px" width="9" height="9" viewBox="0 0 9 9"><path d="M0.5 1H8M0.5 3.3H6M0.5 5.6H7.5M0.5 8H8" stroke="#1899d4" stroke-width="1.1" opacity="0.85"/></svg><div class="abs" style="left:1160.5px;top:600px;font-size:11px;line-height:13px;color:#999;white-space:nowrap;">Std Dev.</div><div class="abs" style="left:1160.5px;top:615px;font-size:13px;line-height:15px;font-weight:bold;color:#333">354</div><svg class="abs" style="left:1245px;top:602px" width="9" height="8" viewBox="0 0 9 8"><path d="M1.8 2.6H7.2M1.8 5H7.2" stroke="#7cc3e6" stroke-width="1"/></svg><div class="abs" style="left:1258.5px;top:600px;font-size:11px;line-height:13px;color:#999;white-space:nowrap;">Mean</div><div class="abs" style="left:1258.5px;top:615px;font-size:13px;line-height:15px;font-weight:bold;color:#333">455</div><div class="abs" style="left:1147px;top:645px;font-size:10px;font-weight:bold;line-height:12px;color:#1899d4">?</div><div class="abs" style="left:1160.5px;top:645px;font-size:11px;line-height:13px;color:#999;white-space:nowrap;">Type</div><div class="abs" style="left:1160.5px;top:660.3px;font-size:11px;line-height:14px;font-weight:bold;color:#333">Latitude</div><div class="abs" style="left:0;top:730px;width:1344px;height:1px;background:#e6e6e6"></div><div class="abs mono" style="left:15px;top:707px;font-size:13px;line-height:16px;color:#3a3a3a;white-space:nowrap">john.terry@gmail.com</div><div class="abs mono" style="left:272px;width:150px;text-align:right;top:707px;font-size:13px;line-height:16px;color:#3a3a3a;white-space:nowrap">09-08-2018</div><div class="abs mono" style="left:491px;width:150px;text-align:right;top:707px;font-size:13px;line-height:16px;color:#3a3a3a;white-space:nowrap">true</div><div class="abs mono" style="left:719.8px;width:150px;text-align:right;top:707px;font-size:13px;line-height:16px;color:#3a3a3a;white-space:nowrap">987</div><div class="abs mono" style="left:948.8px;width:150px;text-align:right;top:707px;font-size:13px;line-height:16px;color:#3a3a3a;white-space:nowrap">987</div><div class="abs mono" style="left:1177.8px;width:150px;text-align:right;top:707px;font-size:13px;line-height:16px;color:#3a3a3a;white-space:nowrap">987</div><div class="abs" style="left:0;top:765px;width:1344px;height:1px;background:#e6e6e6"></div><div class="abs mono" style="left:15px;top:742px;font-size:13px;line-height:16px;color:#3a3a3a;white-space:nowrap">tim.krahl@t-online.de</div><div class="abs mono" style="left:272px;width:150px;text-align:right;top:742px;font-size:13px;line-height:16px;color:#3a3a3a;white-space:nowrap">09-09-2018</div><div class="abs mono" style="left:491px;width:150px;text-align:right;top:742px;font-size:13px;line-height:16px;color:#3a3a3a;white-space:nowrap">false</div><div class="abs mono" style="left:719.8px;width:150px;text-align:right;top:742px;font-size:13px;line-height:16px;color:#3a3a3a;white-space:nowrap">476</div><div class="abs mono" style="left:948.8px;width:150px;text-align:right;top:742px;font-size:13px;line-height:16px;color:#3a3a3a;white-space:nowrap">476</div><div class="abs mono" style="left:1177.8px;width:150px;text-align:right;top:742px;font-size:13px;line-height:16px;color:#3a3a3a;white-space:nowrap">476</div><div class="abs" style="left:0;top:800px;width:1344px;height:1px;background:#e6e6e6"></div><div class="abs mono" style="left:15px;top:777px;font-size:13px;line-height:16px;color:#3a3a3a;white-space:nowrap">johanna.jones@web.gmx</div><div class="abs mono" style="left:272px;width:150px;text-align:right;top:777px;font-size:13px;line-height:16px;color:#3a3a3a;white-space:nowrap">10-07-2018</div><div class="abs mono" style="left:491px;width:150px;text-align:right;top:777px;font-size:13px;line-height:16px;color:#3a3a3a;white-space:nowrap">true</div><div class="abs mono" style="left:719.8px;width:150px;text-align:right;top:777px;font-size:13px;line-height:16px;color:#3a3a3a;white-space:nowrap">345</div><div class="abs mono" style="left:948.8px;width:150px;text-align:right;top:777px;font-size:13px;line-height:16px;color:#3a3a3a;white-space:nowrap">345</div><div class="abs mono" style="left:1177.8px;width:150px;text-align:right;top:777px;font-size:13px;line-height:16px;color:#3a3a3a;white-space:nowrap">345</div><div class="abs" style="left:0;top:835px;width:1344px;height:1px;background:#e6e6e6"></div><div class="abs mono" style="left:15px;top:812px;font-size:13px;line-height:16px;color:#3a3a3a;white-space:nowrap">l.bird@gmail.com</div><div class="abs mono" style="left:272px;width:150px;text-align:right;top:812px;font-size:13px;line-height:16px;color:#3a3a3a;white-space:nowrap">18-04-2018</div><div class="abs mono" style="left:491px;width:150px;text-align:right;top:812px;font-size:13px;line-height:16px;color:#3a3a3a;white-space:nowrap">true</div><div class="abs mono" style="left:719.8px;width:150px;text-align:right;top:812px;font-size:13px;line-height:16px;color:#3a3a3a;white-space:nowrap">34</div><div class="abs mono" style="left:948.8px;width:150px;text-align:right;top:812px;font-size:13px;line-height:16px;color:#3a3a3a;white-space:nowrap">34</div><div class="abs mono" style="left:1177.8px;width:150px;text-align:right;top:812px;font-size:13px;line-height:16px;color:#3a3a3a;white-space:nowrap">34</div><div class="abs" style="left:0;top:870px;width:1344px;height:1px;background:#e6e6e6"></div><div class="abs mono" style="left:15px;top:847px;font-size:13px;line-height:16px;color:#3a3a3a;white-space:nowrap">john.doe@hotmail.de</div><div class="abs mono" style="left:272px;width:150px;text-align:right;top:847px;font-size:13px;line-height:16px;color:#3a3a3a;white-space:nowrap">22-05-2018</div><div class="abs mono" style="left:491px;width:150px;text-align:right;top:847px;font-size:13px;line-height:16px;color:#3a3a3a;white-space:nowrap">true</div><div class="abs mono" style="left:719.8px;width:150px;text-align:right;top:847px;font-size:13px;line-height:16px;color:#3a3a3a;white-space:nowrap">543</div><div class="abs mono" style="left:948.8px;width:150px;text-align:right;top:847px;font-size:13px;line-height:16px;color:#3a3a3a;white-space:nowrap">543</div><div class="abs mono" style="left:1177.8px;width:150px;text-align:right;top:847px;font-size:13px;line-height:16px;color:#3a3a3a;white-space:nowrap">543</div><div class="abs" style="left:0;top:905px;width:1344px;height:1px;background:#e6e6e6"></div><div class="abs mono" style="left:15px;top:882px;font-size:13px;line-height:16px;color:#3a3a3a;white-space:nowrap">mattheus.richard@web.gmx</div><div class="abs mono" style="left:272px;width:150px;text-align:right;top:882px;font-size:13px;line-height:16px;color:#3a3a3a;white-space:nowrap">21-09-2018</div><div class="abs mono" style="left:491px;width:150px;text-align:right;top:882px;font-size:13px;line-height:16px;color:#3a3a3a;white-space:nowrap">true</div><div class="abs mono" style="left:719.8px;width:150px;text-align:right;top:882px;font-size:13px;line-height:16px;color:#3a3a3a;white-space:nowrap">245</div><div class="abs mono" style="left:948.8px;width:150px;text-align:right;top:882px;font-size:13px;line-height:16px;color:#3a3a3a;white-space:nowrap">245</div><div class="abs mono" style="left:1177.8px;width:150px;text-align:right;top:882px;font-size:13px;line-height:16px;color:#3a3a3a;white-space:nowrap">245</div><div class="abs" style="left:0;top:940px;width:1344px;height:1px;background:#e6e6e6"></div><div class="abs mono" style="left:15px;top:917px;font-size:13px;line-height:16px;color:#3a3a3a;white-space:nowrap">info@optus.io</div><div class="abs mono" style="left:272px;width:150px;text-align:right;top:917px;font-size:13px;line-height:16px;color:#3a3a3a;white-space:nowrap">23-11-2018</div><div class="abs mono" style="left:491px;width:150px;text-align:right;top:917px;font-size:13px;line-height:16px;color:#3a3a3a;white-space:nowrap">false</div><div class="abs mono" style="left:719.8px;width:150px;text-align:right;top:917px;font-size:13px;line-height:16px;color:#3a3a3a;white-space:nowrap">876</div><div class="abs mono" style="left:948.8px;width:150px;text-align:right;top:917px;font-size:13px;line-height:16px;color:#3a3a3a;white-space:nowrap">876</div><div class="abs mono" style="left:1177.8px;width:150px;text-align:right;top:917px;font-size:13px;line-height:16px;color:#3a3a3a;white-space:nowrap">876</div><div class="abs" style="left:0;top:975px;width:1344px;height:1px;background:#e6e6e6"></div><div class="abs mono" style="left:15px;top:952px;font-size:13px;line-height:16px;color:#3a3a3a;white-space:nowrap">john.terry@gmail.com</div><div class="abs mono" style="left:272px;width:150px;text-align:right;top:952px;font-size:13px;line-height:16px;color:#3a3a3a;white-space:nowrap">09-08-2018</div><div class="abs mono" style="left:491px;width:150px;text-align:right;top:952px;font-size:13px;line-height:16px;color:#3a3a3a;white-space:nowrap">true</div><div class="abs mono" style="left:719.8px;width:150px;text-align:right;top:952px;font-size:13px;line-height:16px;color:#3a3a3a;white-space:nowrap">987</div><div class="abs mono" style="left:948.8px;width:150px;text-align:right;top:952px;font-size:13px;line-height:16px;color:#3a3a3a;white-space:nowrap">987</div><div class="abs mono" style="left:1177.8px;width:150px;text-align:right;top:952px;font-size:13px;line-height:16px;color:#3a3a3a;white-space:nowrap">987</div><div class="abs" style="left:0;top:1010px;width:1344px;height:1px;background:#e6e6e6"></div><div class="abs mono" style="left:15px;top:987px;font-size:13px;line-height:16px;color:#3a3a3a;white-space:nowrap">tim.krahl@t-online.de</div><div class="abs mono" style="left:272px;width:150px;text-align:right;top:987px;font-size:13px;line-height:16px;color:#3a3a3a;white-space:nowrap">09-09-2018</div><div class="abs mono" style="left:491px;width:150px;text-align:right;top:987px;font-size:13px;line-height:16px;color:#3a3a3a;white-space:nowrap">false</div><div class="abs mono" style="left:719.8px;width:150px;text-align:right;top:987px;font-size:13px;line-height:16px;color:#3a3a3a;white-space:nowrap">476</div><div class="abs mono" style="left:948.8px;width:150px;text-align:right;top:987px;font-size:13px;line-height:16px;color:#3a3a3a;white-space:nowrap">476</div><div class="abs mono" style="left:1177.8px;width:150px;text-align:right;top:987px;font-size:13px;line-height:16px;color:#3a3a3a;white-space:nowrap">476</div><div class="abs" style="left:0;top:1013px;width:1344px;height:37px;background:#fff;border-top:1px solid #c9d3da;border-bottom:1px solid #c9d3da;border-right:1px solid #c9d3da"></div><div class="abs" style="left:0;top:1024px;width:1344px;text-align:center;font-size:13px;line-height:16px;color:#1899d4">Load next 100 rows</div><!--/LOWER-->
<!--UPPER-->
  <div class="abs" style="left:0;top:0;width:1344px;height:36px;background:#f2f2f2"></div>
<div class="abs" style="left:0px;top:2.5px;width:195.5px;height:33.5px;background:#e4e4e4;border-radius:4px 4px 0 0"></div><div class="abs mono" style="left:34px;top:12px;font-size:13px;line-height:16px;color:#333;font-weight:normal;white-space:nowrap">Rating_012019</div><svg class="abs" style="left:170px;top:12px" width="10" height="10" viewBox="0 0 10 10"><path d="M0.8 0.8L9.2 9.2M9.2 0.8L0.8 9.2" stroke="#555" stroke-width="0.9"/></svg><div class="abs" style="left:198px;top:2.5px;width:194px;height:33.5px;background:#fff;border-radius:4px 4px 0 0"></div><div class="abs mono" style="left:231px;top:12px;font-size:13px;line-height:16px;color:#1899d4;font-weight:bold;white-space:nowrap">Rating_032018</div><svg class="abs" style="left:367px;top:12px" width="10" height="10" viewBox="0 0 10 10"><path d="M0.8 0.8L9.2 9.2M9.2 0.8L0.8 9.2" stroke="#555" stroke-width="0.9"/></svg><div class="abs" style="left:394px;top:2.5px;width:195.5px;height:33.5px;background:#e4e4e4;border-radius:4px 4px 0 0"></div><svg class="abs" style="left:398px;top:4px" width="24" height="24" viewBox="0 0 24 24"><g fill="none" stroke="#6a6a6a" stroke-width="0.95"><rect x="5.5" y="7.8" width="10" height="9.5" rx="0.9"/><path d="M5.5 13.4H15.5M11.4 9V17.3"/></g><rect x="5" y="7.3" width="11" height="2.3" rx="0.6" fill="#6a6a6a"/><path d="M17.9 4.9H21.3L20 8.8H21.7L14.3 19.8L16.1 11.7H14.7Z" fill="#e4e4e4" stroke="#e4e4e4" stroke-width="1.6" stroke-linejoin="round"/><path d="M17.9 4.9H21.3L20 8.8H21.7L14.3 19.8L16.1 11.7H14.7Z" fill="#6a6a6a"/></svg><div class="abs mono" style="left:428px;top:12px;font-size:13px;line-height:16px;color:#333;font-weight:normal;white-space:nowrap">Sales</div><svg class="abs" style="left:564px;top:12px" width="10" height="10" viewBox="0 0 10 10"><path d="M0.8 0.8L9.2 9.2M9.2 0.8L0.8 9.2" stroke="#555" stroke-width="0.9"/></svg><div class="abs" style="left:591.5px;top:2.5px;width:195.5px;height:33.5px;background:#e4e4e4;border-radius:4px 4px 0 0"></div><div class="abs mono" style="left:625px;top:12px;font-size:13px;line-height:16px;color:#333;font-weight:normal;white-space:nowrap">Rating_092018</div><svg class="abs" style="left:762px;top:12px" width="10" height="10" viewBox="0 0 10 10"><path d="M0.8 0.8L9.2 9.2M9.2 0.8L0.8 9.2" stroke="#555" stroke-width="0.9"/></svg><svg class="abs" style="left:803px;top:10px" width="16" height="16" viewBox="0 0 16 16"><path d="M8 1.5V14.5M1.5 8H14.5" stroke="#1899d4" stroke-width="1.6"/></svg><svg class="abs" style="left:1286px;top:10px" width="12" height="16" viewBox="0 0 12 16"><path d="M9.5 1.5 L3 8 L9.5 14.5" fill="none" stroke="#c8c8c8" stroke-width="1.2"/></svg><svg class="abs" style="left:1321px;top:10px" width="12" height="16" viewBox="0 0 12 16"><path d="M2.5 1.5 L9 8 L2.5 14.5" fill="none" stroke="#c8c8c8" stroke-width="1.2"/></svg>
  <div class="abs" style="left:0;top:82px;width:1344px;height:1px;background:#e8e8e8"></div>
  <div class="abs" style="left:22px;top:53px;font-size:13px;font-weight:bold;color:#333;line-height:15px">SQL Editor</div>
  <div class="abs" style="left:174px;top:41px;width:1px;height:36px;background:#e8e8e8"></div>
  <div class="abs" style="left:381px;top:41px;width:1px;height:36px;background:#e8e8e8"></div>
  <svg class="abs" style="left:199px;top:54px" width="18" height="12" viewBox="0 0 18 12"><g fill="none" stroke="#666" stroke-width="0.95"><path d="M2 7 C5 2.5 12 2 16.5 6.5"/><path d="M1.5 3 L2 7.5 L6.5 8"/></g></svg>
  <div class="abs" style="left:225px;top:52px;font-size:13px;color:#333;line-height:16px">Undo</div>
  <svg class="abs" style="left:294px;top:54px" width="18" height="12" viewBox="0 0 18 12"><g fill="none" stroke="#666" stroke-width="0.95"><path d="M1.5 6.5 C6 2 13 2.5 16 7"/><path d="M16.5 3 L16 7.5 L11.5 8"/></g></svg>
  <div class="abs" style="left:320px;top:52px;font-size:13px;color:#333;line-height:16px">Redo</div>
  <svg class="abs" style="left:407px;top:51px" width="16" height="17" viewBox="0 0 16 17"><g fill="none" stroke="#747474" stroke-width="1"><path d="M1.3 5.6V1.5H5.8"/><path d="M6 8.5H10.8"/><path d="M14.5 11.2V15.5H10"/></g><path d="M3.7 5H8.4M7.2 11.9H12" stroke="#b8b8b8" stroke-width="1.1"/></svg>
  <div class="abs" style="left:432px;top:52px;font-size:13px;color:#333;line-height:16px">Format SQL</div>
  <div class="abs" style="left:1053px;top:41px;width:119px;height:36px;border:1px solid #c5ced6;border-radius:2px;background:#fff"></div>
  <div class="abs" style="left:1136px;top:42px;width:1px;height:34px;background:#c5ced6"></div>
  <div class="abs" style="left:1068px;top:52px;font-size:13px;color:#444;line-height:16px">Save as..</div>
  <svg class="abs" style="left:1149px;top:56px" width="10" height="6" viewBox="0 0 10 6"><path d="M0.5 0.5H9.5L5 5.5Z" fill="#333"/></svg>
  <div class="abs" style="left:1192px;top:41px;width:134px;height:36px;background:#1a9bd7;border-radius:2px"></div>
  <div class="abs" style="left:1208px;top:52px;font-size:13px;color:#fff;line-height:16px">View results</div>
  <svg class="abs" style="left:1294px;top:50px" width="18" height="18" viewBox="0 0 18 18"><circle cx="9" cy="9" r="7.3" fill="none" stroke="#fff" stroke-width="1.3"/><path d="M7 5.5V12.5L12.5 9Z" fill="#fff"/></svg>
<div class="abs" style="left:0;top:83px;width:1344px;height:265px;background:#fcfcfc;border-bottom:1px solid #e8e8e8"></div><div class="abs mono" style="left:40px;top:87.5px;width:48px;text-align:right;font-size:13px;line-height:16px;color:#b4b4b4">1</div><div class="abs mono" style="left:40px;top:111.5px;width:48px;text-align:right;font-size:13px;line-height:16px;color:#b4b4b4">2</div><div class="abs mono" style="left:40px;top:135.5px;width:48px;text-align:right;font-size:13px;line-height:16px;color:#b4b4b4">3</div><div class="abs mono" style="left:40px;top:159.5px;width:48px;text-align:right;font-size:13px;line-height:16px;color:#b4b4b4">4</div><div class="abs mono" style="left:40px;top:183.5px;width:48px;text-align:right;font-size:13px;line-height:16px;color:#b4b4b4">5</div><div class="abs mono" style="left:40px;top:207.5px;width:48px;text-align:right;font-size:13px;line-height:16px;color:#b4b4b4">6</div><div class="abs mono" style="left:40px;top:231.5px;width:48px;text-align:right;font-size:13px;line-height:16px;color:#b4b4b4">7</div><div class="abs mono" style="left:40px;top:255.5px;width:48px;text-align:right;font-size:13px;line-height:16px;color:#b4b4b4">8</div><div class="abs mono" style="left:40px;top:279.5px;width:48px;text-align:right;font-size:13px;line-height:16px;color:#b4b4b4">9</div><div class="abs mono" style="left:40px;top:303.5px;width:48px;text-align:right;font-size:13px;line-height:16px;color:#b4b4b4">10</div><div class="abs mono" style="left:40px;top:327.5px;width:48px;text-align:right;font-size:13px;line-height:16px;color:#b4b4b4">11</div><div class="abs mono" style="left:111px;top:88.5px;font-size:13px;line-height:16px;color:#333;white-space:pre"><span style="color:#4f3ee6">SELECT</span> <span style="display:inline-block;transform:translateY(4.5px) scale(1.4)">*</span> <span style="color:#4f3ee6">FROM</span> erp.orders <span style="color:#4f3ee6">WHERE</span> erp.orders.date &gt; now()</div><!--/UPPER-->
</div>
</body></html>
